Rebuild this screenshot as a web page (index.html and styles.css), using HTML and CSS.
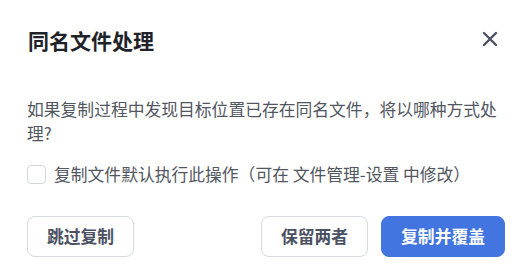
FILE: index.html
```html
<!DOCTYPE html>
<html lang="zh-CN">
<head>
<meta charset="utf-8">
<title>同名文件处理</title>
<link rel="stylesheet" href="styles.css">
</head>
<body>
<div class="dialog">
  <div class="header">
    <div class="title">同名文件处理</div>
    <button class="close" aria-label="关闭">
      <svg width="16" height="16" viewBox="0 0 16 16"><path d="M2 2 L14 14 M14 2 L2 14" stroke="#4b5163" stroke-width="2.4" stroke-linecap="round" fill="none"/></svg>
    </button>
  </div>
  <p class="message">如果复制过程中发现目标位置已存在同名文件，将以哪种方式处理?</p>
  <label class="check-row">
    <span class="checkbox"></span>
    <span class="check-text">复制文件默认执行此操作（可在 文件管理-设置 中修改）</span>
  </label>
  <div class="footer">
    <button class="btn">跳过复制</button>
    <div class="right">
      <button class="btn">保留两者</button>
      <button class="btn primary">复制并覆盖</button>
    </div>
  </div>
</div>
</body>
</html>
```

FILE: styles.css
```css
html, body {
  margin: 0;
  padding: 0;
  background: #ffffff;
}
body {
  font-family: "Noto Sans CJK SC", "Noto Sans", sans-serif;
  width: 526px;
  height: 277px;
  overflow: hidden;
}
.dialog {
  padding: 26px 21px 0 27px;
}
.header {
  display: flex;
  align-items: center;
  justify-content: space-between;
  height: 28px;
}
.title {
  font-size: 21px;
  font-weight: 700;
  color: #1f2329;
  line-height: 28px;
  padding-left: 1px;
}
.close {
  width: 30px;
  height: 30px;
  border: 0;
  background: transparent;
  padding: 0;
  display: flex;
  align-items: center;
  justify-content: center;
  margin-top: -3px;
}
.message {
  margin: 43px 0 0 0;
  font-size: 16.8px;
  line-height: 24px;
  color: #51565f;
}
.check-row {
  display: flex;
  align-items: center;
  gap: 8px;
  margin-top: 17px;
  height: 24px;
}
.checkbox {
  border: 1px solid #d3d6dd;
  border-radius: 4px;
  box-sizing: border-box;
  width: 19px;
  height: 19px;
  flex: none;
}
.check-text {
  font-size: 16.8px;
  color: #51565f;
  line-height: 24px;
  white-space: nowrap;
}
.footer {
  display: flex;
  justify-content: space-between;
  align-items: center;
  margin-top: 30px;
}
.right {
  display: flex;
  gap: 13px;
}
.btn {
  height: 41px;
  padding: 0 19px;
  border: 1px solid #d6d9e0;
  border-radius: 8px;
  background: #ffffff;
  color: #4b5163;
  font-family: "Noto Sans CJK SC", "Noto Sans", sans-serif;
  font-size: 16.8px;
  font-weight: 700;
  line-height: 1;
}
.btn.primary {
  background: #4275df;
  border-color: #4275df;
  color: #ffffff;
}
```
